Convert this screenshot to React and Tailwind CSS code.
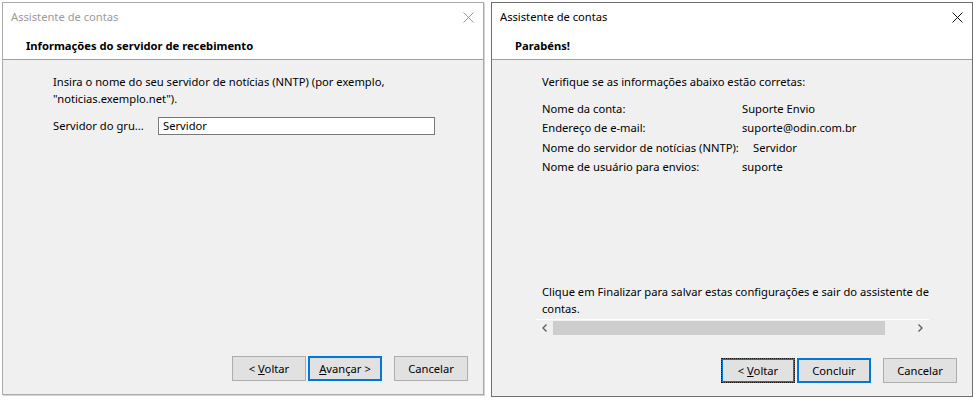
import React from "react";

const font = { fontFamily: '"Noto Sans", "Open Sans", sans-serif' };

function CloseX({ color }) {
  return (
    <svg width="11" height="11" viewBox="0 0 11 11" className="block">
      <path d="M0.5 0.5 L10.5 10.5 M10.5 0.5 L0.5 10.5" stroke={color} strokeWidth="1" fill="none" />
    </svg>
  );
}

function Btn({ children, variant }) {
  const base =
    "w-[74px] h-[25px] flex items-center justify-center bg-[#e1e1e1] text-black text-[11.2px] leading-none";
  if (variant === "default")
    return <div className={base + " border-2 border-[#0078d7]"}><span>{children}</span></div>;
  if (variant === "focus")
    return (
      <div className={base + " border-2 border-[#0078d7] outline-1 outline-dotted outline-[#1a1a1a] outline-offset-[-1px]"}>
        <span>{children}</span>
      </div>
    );
  return <div className={base + " border border-[#adadad]"}><span>{children}</span></div>;
}

function Window({ active, title, heading, children, buttons, h }) {
  return (
    <div
      className={
        "flex flex-col border shrink-0 w-[482px] " +
        h +
        (active ? " border-[#6f6f6f]" : " border-[#aaaaaa] shadow-[1px_1px_0_#d4d4d4]")
      }
    >
      <div className="bg-white flex flex-col">
        <div className="h-[28px] flex items-center justify-between pl-[8px] pr-[9px]">
          <span className={"text-[11.2px] " + (active ? "text-black" : "text-[#9b9b9b]")}>{title}</span>
          <CloseX color={active ? "#111" : "#9b9b9b"} />
        </div>
        <div className="h-[28px] flex items-center pl-[23px] pt-[3px]">
          <span className="text-[11.2px] font-bold text-black">{heading}</span>
        </div>
      </div>
      <div className="h-px bg-[#a0a0a0]" />
      <div className="flex-1 bg-[#f0f0f0] flex flex-col text-[11.2px] text-black">
        {children}
        <div className="flex justify-end gap-[2px] pr-[15px] pb-[13px]">{buttons}</div>
      </div>
    </div>
  );
}

function ScrollArrow({ dir }) {
  return (
    <svg width="6" height="8" viewBox="0 0 6 8" className="block">
      <path
        d={dir === "l" ? "M4.5 0.5 L1 4 L4.5 7.5" : "M1.5 0.5 L5 4 L1.5 7.5"}
        stroke="#606060"
        strokeWidth="1.4"
        fill="none"
      />
    </svg>
  );
}

export default function App() {
  return (
    <div className="w-[973px] h-[400px] bg-white flex items-start gap-[7px] pl-[2px] pt-[2px] overflow-hidden" style={font}>
      <Window
        active={false}
        h="h-[393px]"
        title="Assistente de contas"
        heading="Informações do servidor de recebimento"
        buttons={
          <>
            <Btn>&lt; <u>V</u>oltar</Btn>
            <Btn variant="default"><u>A</u>vançar &gt;</Btn>
            <div className="w-[8px]" />
            <Btn>Cancelar</Btn>
          </>
        }
      >
        <div className="pl-[50px] pt-[13px] leading-[17px] whitespace-nowrap">
          <div>Insira o nome do seu servidor de notícias (NNTP) (por exemplo,</div>
          <div>"noticias.exemplo.net").</div>
        </div>
        <div className="flex items-center pl-[50px] mt-[10px]">
          <span className="w-[105px] whitespace-nowrap">Servidor do gru...</span>
          <div className="w-[277px] h-[18px] bg-white border border-[#7a7a7a] flex items-center pl-[4px]">
            Servidor
          </div>
        </div>
        <div className="flex-1" />
      </Window>

      <Window
        active={true}
        h="h-[395px]"
        title="Assistente de contas"
        heading="Parabéns!"
        buttons={
          <>
            <Btn variant="focus">&lt; <u>V</u>oltar</Btn>
            <Btn variant="default">Concluir</Btn>
            <div className="w-[8px]" />
            <Btn>Cancelar</Btn>
          </>
        }
      >
        <div className="pl-[50px] pt-[14px] leading-[16px] whitespace-nowrap">
          <div>Verifique se as informações abaixo estão corretas:</div>
          <div className="mt-[9px] flex flex-col">
            <div className="flex h-[19.5px] items-center">
              <span className="w-[200px]">Nome da conta:</span>
              <span>Suporte Envio</span>
            </div>
            <div className="flex h-[19.5px] items-center">
              <span className="w-[200px]">Endereço de e-mail:</span>
              <span>suporte@odin.com.br</span>
            </div>
            <div className="flex h-[19.5px] items-center">
              <span className="w-[200px]">Nome do servidor de notícias (NNTP):</span>
              <span className="ml-[11px]">Servidor</span>
            </div>
            <div className="flex h-[19.5px] items-center">
              <span className="w-[200px]">Nome de usuário para envios:</span>
              <span>suporte</span>
            </div>
          </div>
        </div>
        <div className="flex-1" />
        <div className="pl-[50px] leading-[17px] whitespace-nowrap">
          <div>Clique em Finalizar para salvar estas configurações e sair do assistente de</div>
          <div>contas.</div>
        </div>
        <div className="ml-[44px] mt-[2px] w-[393px] h-[16px] border-t border-white flex items-center">
          <div className="w-[17px] flex justify-center"><ScrollArrow dir="l" /></div>
          <div className="w-[332px] h-[14px] bg-[#cdcdcd]" />
          <div className="flex-1 flex justify-end pr-[6px]"><ScrollArrow dir="r" /></div>
        </div>
        <div className="h-[23px]" />
      </Window>
    </div>
  );
}
